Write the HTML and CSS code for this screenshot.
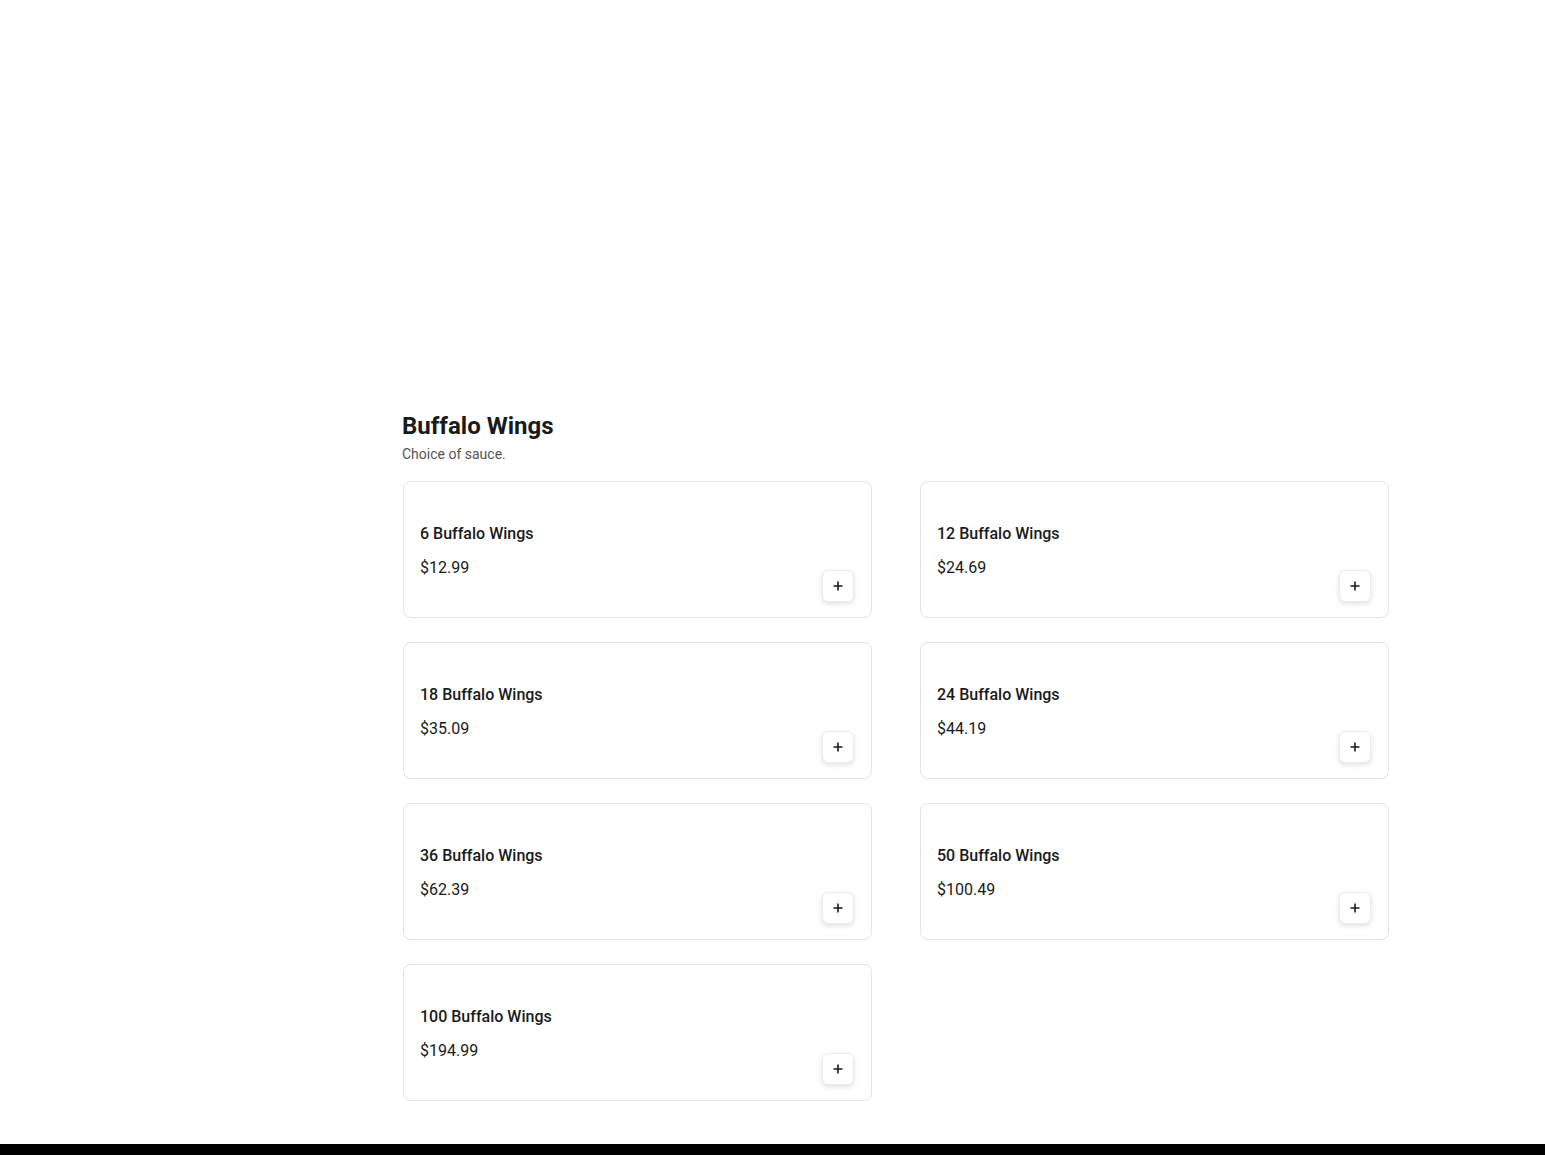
FILE: index.html
```html
<!DOCTYPE html>
<html>
<head>
<meta charset="utf-8">
<link rel="stylesheet" href="styles.css">
</head>
<body>
<div class="hero"></div>
<main class="menu">
  <section class="category">
    <h2 class="cat-title">Buffalo Wings</h2>
    <p class="cat-desc">Choice of sauce.</p>
    <div class="grid">
      <div class="card"><div class="info"><div class="name">6 Buffalo Wings</div><div class="price">$12.99</div></div><button class="add"><svg width="12" height="12" viewBox="0 0 12 12"><path d="M6 1.5v9M1.5 6h9" stroke="#1a1a1a" stroke-width="1.6"/></svg></button></div>
      <div class="card"><div class="info"><div class="name">12 Buffalo Wings</div><div class="price">$24.69</div></div><button class="add"><svg width="12" height="12" viewBox="0 0 12 12"><path d="M6 1.5v9M1.5 6h9" stroke="#1a1a1a" stroke-width="1.6"/></svg></button></div>
      <div class="card"><div class="info"><div class="name">18 Buffalo Wings</div><div class="price">$35.09</div></div><button class="add"><svg width="12" height="12" viewBox="0 0 12 12"><path d="M6 1.5v9M1.5 6h9" stroke="#1a1a1a" stroke-width="1.6"/></svg></button></div>
      <div class="card"><div class="info"><div class="name">24 Buffalo Wings</div><div class="price">$44.19</div></div><button class="add"><svg width="12" height="12" viewBox="0 0 12 12"><path d="M6 1.5v9M1.5 6h9" stroke="#1a1a1a" stroke-width="1.6"/></svg></button></div>
      <div class="card"><div class="info"><div class="name">36 Buffalo Wings</div><div class="price">$62.39</div></div><button class="add"><svg width="12" height="12" viewBox="0 0 12 12"><path d="M6 1.5v9M1.5 6h9" stroke="#1a1a1a" stroke-width="1.6"/></svg></button></div>
      <div class="card"><div class="info"><div class="name">50 Buffalo Wings</div><div class="price">$100.49</div></div><button class="add"><svg width="12" height="12" viewBox="0 0 12 12"><path d="M6 1.5v9M1.5 6h9" stroke="#1a1a1a" stroke-width="1.6"/></svg></button></div>
      <div class="card"><div class="info"><div class="name">100 Buffalo Wings</div><div class="price">$194.99</div></div><button class="add"><svg width="12" height="12" viewBox="0 0 12 12"><path d="M6 1.5v9M1.5 6h9" stroke="#1a1a1a" stroke-width="1.6"/></svg></button></div>
    </div>
  </section>
</main>
<footer class="footer"></footer>
</body>
</html>
```
FILE: styles.css
```css
* { box-sizing: border-box; }
html, body { margin: 0; padding: 0; background: #fff; }
body {
  font-family: Roboto, "Liberation Sans", sans-serif;
  color: #1a1a1a;
}
.hero { height: 410px; }
.menu {
  width: 987px;
  margin-left: 402px;
  padding-bottom: 43px;
}
.cat-title {
  margin: 0;
  font-size: 24px;
  line-height: 32px;
  font-weight: 700;
  color: #1a1a1a;
}
.cat-desc {
  margin: 2px 0 0;
  font-size: 14px;
  line-height: 20px;
  color: #555;
}
.grid {
  margin-top: 17px;
  margin-left: 1px;
  display: grid;
  grid-template-columns: 469px 469px;
  column-gap: 48px;
  row-gap: 24px;
}
.card {
  height: 137px;
  border: 1px solid #e3e3e3;
  border-radius: 8px;
  padding: 14px 17px 15px 16px;
  display: flex;
  justify-content: space-between;
  align-items: center;
  background: #fff;
}
.info {
  display: flex;
  flex-direction: column;
  gap: 10px;
  padding-top: 3px;
}
.name {
  font-size: 16px;
  line-height: 24px;
  font-weight: 500;
}
.price {
  font-size: 16px;
  line-height: 24px;
  font-weight: 400;
}
.add {
  align-self: flex-end;
  width: 32px;
  height: 32px;
  padding: 0;
  border: 1px solid #ececec;
  border-radius: 6px;
  background: #fff;
  box-shadow: 0 2px 5px rgba(0,0,0,0.12);
  display: flex;
  align-items: center;
  justify-content: center;
}
.footer {
  height: 11px;
  background: #000;
}
```
